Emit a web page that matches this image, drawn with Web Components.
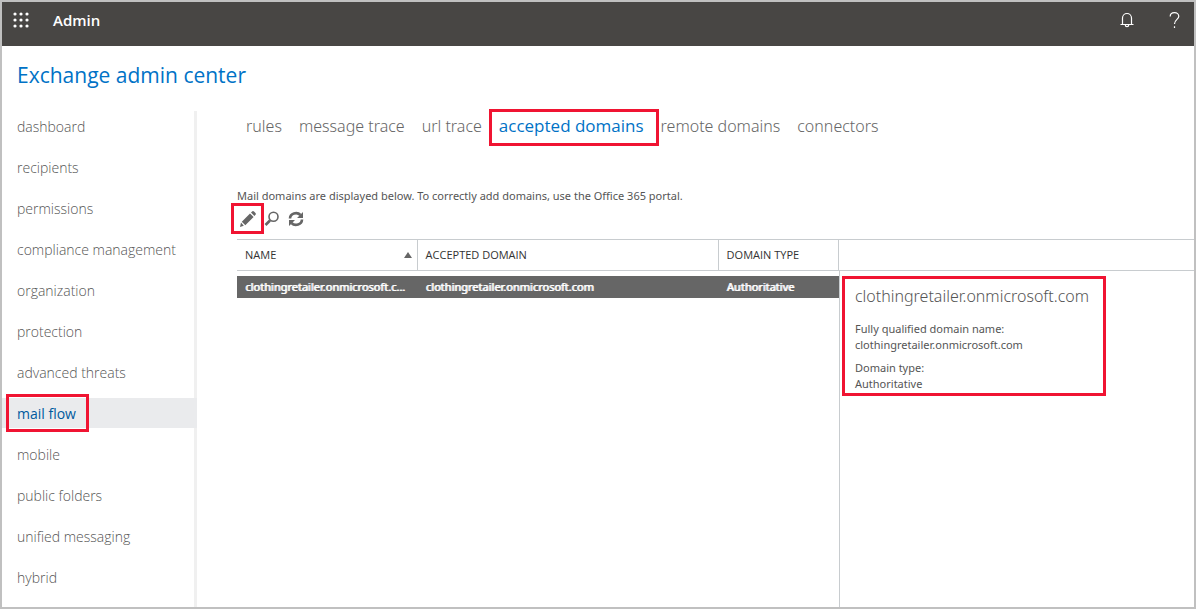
<!DOCTYPE html>
<html lang="en">
<head>
<meta charset="utf-8">
<title>Exchange admin center</title>
<style>
  html { height: 100%; }
  body {
    margin: 0; min-height: 100%; box-sizing: border-box; border: 2px solid #c0c0c0; background: #fff;
    display: flex; flex-direction: column;
    font-family: "Open Sans", "Noto Sans", sans-serif; font-size: 11px; line-height: 16px; color: #555;
    --text-font: "Noto Sans", "Open Sans", sans-serif;
    --accent: #0072c6; --mark: #f01432; --line: #c8cccf;
  }
  eac-app { flex: 1; }
</style>
</head>
<body>
<eac-app>
  <eac-header slot="header">Admin</eac-header>
  <span slot="title">Exchange admin center</span>
  <eac-nav slot="nav">
    <eac-nav-item>dashboard</eac-nav-item>
    <eac-nav-item>recipients</eac-nav-item>
    <eac-nav-item>permissions</eac-nav-item>
    <eac-nav-item>compliance management</eac-nav-item>
    <eac-nav-item>organization</eac-nav-item>
    <eac-nav-item>protection</eac-nav-item>
    <eac-nav-item>advanced threats</eac-nav-item>
    <eac-nav-item selected>mail flow</eac-nav-item>
    <eac-nav-item>mobile</eac-nav-item>
    <eac-nav-item>public folders</eac-nav-item>
    <eac-nav-item>unified messaging</eac-nav-item>
    <eac-nav-item>hybrid</eac-nav-item>
  </eac-nav>
  <eac-tabs>
    <eac-tab>rules</eac-tab>
    <eac-tab>message trace</eac-tab>
    <eac-tab>url trace</eac-tab>
    <eac-tab selected>accepted domains</eac-tab>
    <eac-tab>remote domains</eac-tab>
    <eac-tab>connectors</eac-tab>
  </eac-tabs>
  <eac-toolbar>Mail domains are displayed below. To correctly add domains, use the Office 365 portal.</eac-toolbar>
  <eac-list>
    <eac-details slot="details">
      <span slot="heading">clothingretailer.onmicrosoft.com</span>
      <span slot="name">clothingretailer.onmicrosoft.com</span>
      <span slot="type">Authoritative</span>
    </eac-details>
  </eac-list>
</eac-app>

<script>
const define = (name, html) => {
  const template = document.createElement('template');
  template.innerHTML = html;
  customElements.define(name, class extends HTMLElement {
    constructor() {
      super();
      this.attachShadow({ mode: 'open' }).append(template.content.cloneNode(true));
    }
  });
};

define('eac-app', `
<style>
  :host { display: flex; flex-direction: column; }
  h1 { margin: 0; padding: 13px 15px 0; font-size: 21px; line-height: 32px; font-weight: 400; color: var(--accent); }
  .body { flex: 1; display: flex; margin-top: 20px; }
  main { flex: 1; min-width: 0; display: flex; flex-direction: column; padding-left: 40px; }
</style>
<slot name="header"></slot>
<h1><slot name="title"></slot></h1>
<div class="body"><slot name="nav"></slot><main><slot></slot></main></div>`);

define('eac-header', `
<style>
  :host { display: block; background: #484644; color: #fff; }
  header { display: flex; align-items: center; height: 36px; padding: 0 13px 8px 11px; }
  button { display: flex; padding: 0; border: 0; background: none; color: inherit; }
  strong { flex: 1; margin-left: 24px; font-size: 15px; line-height: 20px; font-weight: 600; }
  .end { display: flex; gap: 34px; }
  svg { display: block; }
</style>
<header>
  <button aria-label="App launcher"><svg width="16" height="16" fill="none" stroke="#fff" stroke-width="3.2" stroke-linecap="round">
    <path d="M2 2h.01M8 2h.01M14 2h.01M2 8h.01M8 8h.01M14 8h.01M2 14h.01M8 14h.01M14 14h.01"/></svg></button>
  <strong><slot></slot></strong>
  <div class="end">
    <button aria-label="Notifications"><svg width="16" height="18" fill="none" stroke="#fff" stroke-width="1.2">
      <path d="M3.5 13.5V7a4.5 4.5 0 0 1 9 0v6.500M1.500 13.500h13M6.300 14a1.700 1.700 0 0 0 3.400 0"/></svg></button>
    <button aria-label="Help"><svg width="12" height="18" fill="none" stroke="#fff" stroke-width="1.2">
      <path d="M1.200 5.500C1.200 3 3 1.600 5.500 1.600S9.800 3 9.800 5.300C9.800 8.300 5.500 8.600 5.500 13M5.500 15.300v1.700"/></svg></button>
  </div>
</header>`);

define('eac-nav', `
<style>
  :host { display: block; flex: none; width: 195px; box-sizing: border-box; box-shadow: inset -3px 0 0 #f0f0f0; }
  nav { display: flex; flex-direction: column; gap: 11px; }
</style>
<nav aria-label="Main"><slot></slot></nav>`);

define('eac-nav-item', `
<style>
  :host { display: block; padding: 2px 0 0 15px; line-height: 28px; font-size: 14px; font-weight: 300; color: #555; }
  :host([selected]) { background: #eaebed; color: #005a9e; font-weight: 400; }
  a { position: relative; display: inline-block; color: inherit; text-decoration: none; }
  :host([selected]) a::after { content: ""; position: absolute; inset: -6px -13px -4px -11px; border: 3px solid var(--mark); }
</style>
<a href="#"><slot></slot></a>`);

define('eac-tabs', `
<style>
  :host { display: block; padding: 3px 0 0 9px; }
  nav { display: flex; gap: 17px; }
</style>
<nav aria-label="Mail flow"><slot></slot></nav>`);

define('eac-tab', `
<style>
  :host { display: block; font-family: var(--text-font); font-size: 16px; line-height: 24px; font-weight: 300; color: #666; white-space: nowrap; }
  :host([selected]) { color: var(--accent); font-family: "Open Sans", sans-serif; font-size: 17px; font-weight: 400; }
  a { position: relative; display: block; color: inherit; text-decoration: none; }
  :host([selected]) a::after { content: ""; position: absolute; inset: -5px -15px -8px -10px; border: 3px solid var(--mark); }
</style>
<a href="#"><slot></slot></a>`);

define('eac-toolbar', `
<style>
  :host { display: block; padding-top: 50px; font-family: var(--text-font); }
  p { margin: 0; }
  div { display: flex; gap: 8px; padding: 7px 0 12px 3px; }
  button { position: relative; display: flex; padding: 0; border: 0; background: none; color: #666; }
  .marked::after { content: ""; position: absolute; inset: -8px -8px -7px -9px; border: 3px solid var(--mark); }
  svg { display: block; }
</style>
<p><slot></slot></p>
<div>
  <button class="marked" aria-label="Edit"><svg width="16" height="16" fill="#666">
    <path d="M0 16l1-4.500L3.800 14.800zM1.800 10.700L10 2.500 13.600 6 5.300 14.200zM11 1.600L12.400.300Q13.200-.200 14 .500L15.500 2Q16.200 3 15.500 3.700L14.400 5z"/></svg></button>
  <button aria-label="Search"><svg width="16" height="16" fill="none" stroke="#666">
    <circle cx="9.500" cy="5.800" r="4.500" stroke-width="1.600"/><path d="M6 9.500L1.500 14" stroke-width="2.600"/></svg></button>
  <button aria-label="Refresh"><svg width="16" height="16" fill="none" stroke="#666" stroke-width="2.600">
    <path d="M2 7.500a6 5.500 0 0 1 10.500-3.500M14 8.500a6 5.500 0 0 1-10.500 3.500"/><path d="M15 1v6H9zM1 15V9h6z" fill="#666" stroke="none"/></svg></button>
</div>`);

define('eac-list', `
<style>
  :host { flex: 1; display: grid; grid-template-columns: 602fr 355fr; grid-template-rows: 1fr; }
  table { width: 100%; table-layout: fixed; border-collapse: separate; border-spacing: 0; }
  th { box-sizing: border-box; height: 32px; padding: 0 8px; text-align: left; font-weight: 400; color: #333;
       border: solid var(--line); border-width: 1px 1px 1px 0; }
  th span { display: flex; justify-content: space-between; align-items: center; }
  th:first-child { padding-right: 5px; }
  i { border: 4px solid transparent; border-top: 0; border-bottom: 6px solid #666; }
  .space td { height: 5px; padding: 0; }
  .row td { height: 22px; padding: 0 8px; background: #666; color: #fff; text-shadow: 1px 0 #fff;
       font-family: var(--text-font); line-height: 22px; overflow: hidden; text-overflow: ellipsis; white-space: nowrap; }
  .side { display: flex; flex-direction: column; }
  .top { box-sizing: border-box; height: 32px; border: solid var(--line); border-width: 1px 0; }
  .pane { flex: 1; border-left: 1px solid var(--line); }
</style>
<div>
  <table>
    <colgroup><col style="width:30%"><col style="width:50%"><col style="width:20%"></colgroup>
    <thead><tr><th><span>NAME<i></i></span></th><th>ACCEPTED DOMAIN</th><th>DOMAIN TYPE</th></tr></thead>
    <tbody>
      <tr class="space"><td colspan="3"></td></tr>
      <tr class="row"><td>clothingretailer.onmicrosoft.c...</td><td>clothingretailer.onmicrosoft.com</td><td>Authoritative</td></tr>
    </tbody>
  </table>
</div>
<div class="side"><div class="top"></div><div class="pane"><slot name="details"></slot></div></div>`);

define('eac-details', `
<style>
  :host { display: block; width: fit-content; margin: 5px 0 0 2px; border: 3px solid var(--mark); padding: 6px 14px 1px 10px;
    font-family: var(--text-font); }
  h2 { margin: 0 0 14px; font-size: 16px; line-height: 22px; font-weight: 300; }
  dl { margin: 0; display: grid; gap: 7px; }
  dd { margin: 0; }
</style>
<h2><slot name="heading"></slot></h2>
<dl>
  <div><dt>Fully qualified domain name:</dt><dd><slot name="name"></slot></dd></div>
  <div><dt>Domain type:</dt><dd><slot name="type"></slot></dd></div>
</dl>`);
</script>
</body>
</html>
